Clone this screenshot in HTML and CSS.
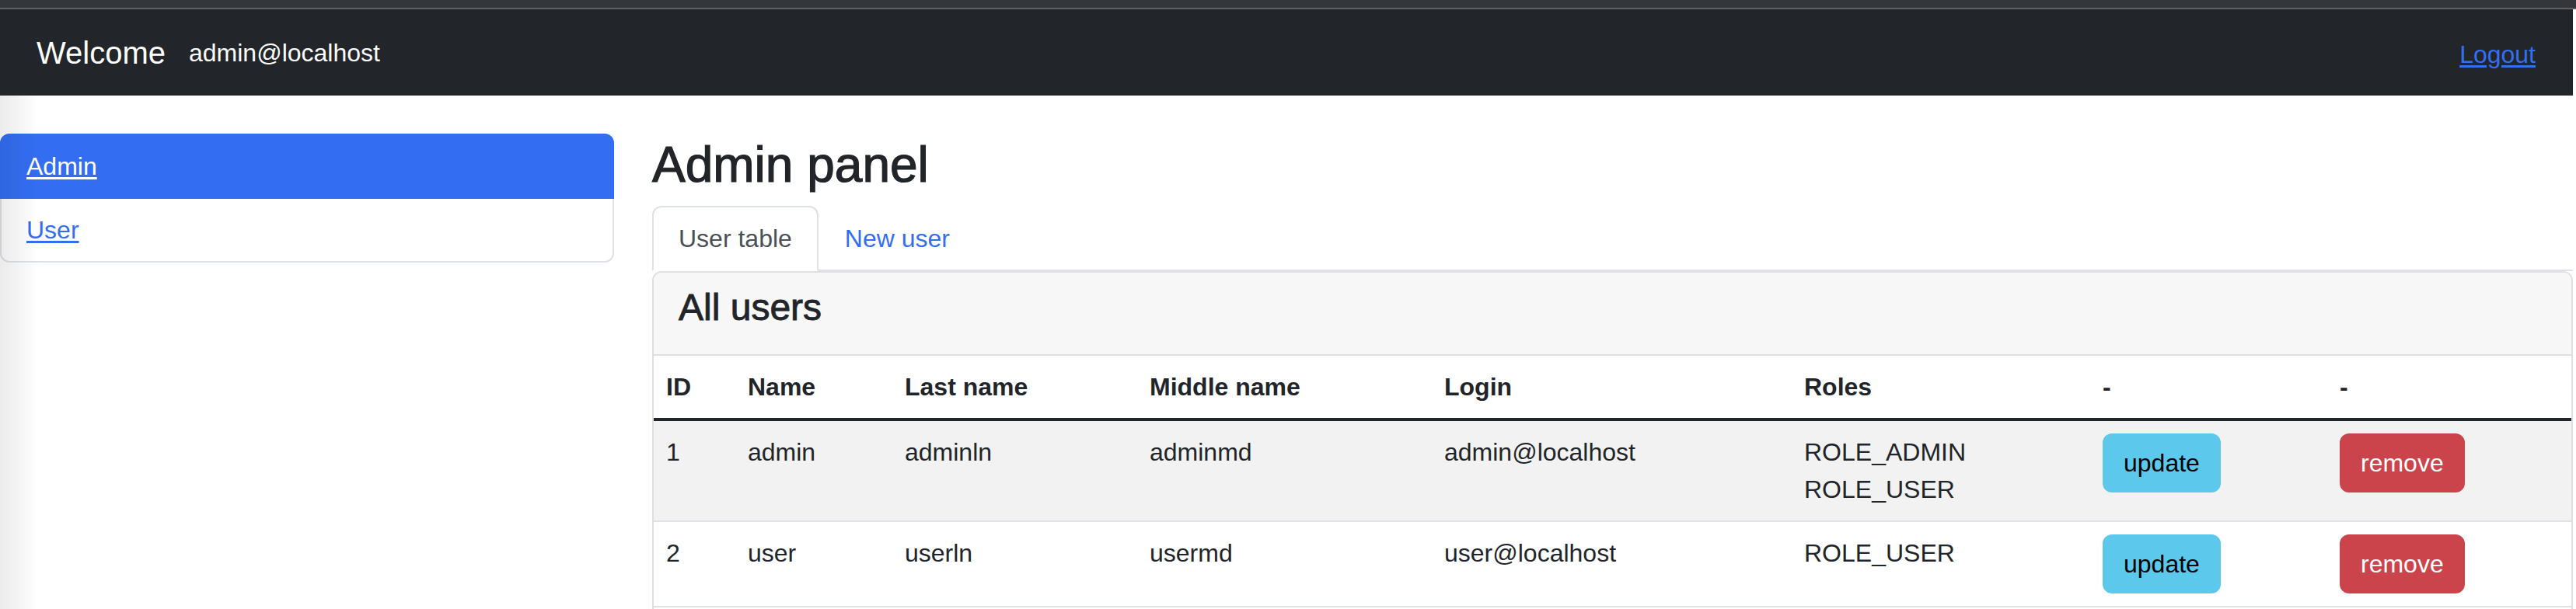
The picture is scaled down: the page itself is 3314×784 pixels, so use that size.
FILE: index.html
```html
<!DOCTYPE html>
<html lang="en">
<head>
<meta charset="utf-8">
<title>Admin panel</title>
<link rel="stylesheet" href="styles.css">
</head>
<body>
<div class="topbar"></div>
<div class="page">
  <nav class="navbar">
    <div class="brand-group">
      <span class="brand">Welcome</span>
      <span class="nav-user">admin@localhost</span>
    </div>
    <a class="logout" href="#">Logout</a>
  </nav>
  <div class="layout">
    <aside class="sidebar">
      <div class="list-group">
        <a class="list-item active" href="#">Admin</a>
        <a class="list-item" href="#">User</a>
      </div>
    </aside>
    <main class="main">
      <h2 class="title">Admin panel</h2>
      <ul class="tabs">
        <li><a class="tab active" href="#">User table</a></li>
        <li><a class="tab" href="#">New user</a></li>
      </ul>
      <div class="card">
        <div class="card-header"><h3 class="card-title">All users</h3></div>
        <table class="users">
          <colgroup>
            <col class="c-id"><col class="c-name"><col class="c-last"><col class="c-middle">
            <col class="c-login"><col class="c-roles"><col class="c-upd"><col class="c-rem">
          </colgroup>
          <thead>
            <tr><th>ID</th><th>Name</th><th>Last name</th><th>Middle name</th><th>Login</th><th>Roles</th><th>-</th><th>-</th></tr>
          </thead>
          <tbody>
            <tr>
              <td>1</td><td>admin</td><td>adminln</td><td>adminmd</td><td>admin@localhost</td>
              <td><div>ROLE_ADMIN</div><div>ROLE_USER</div></td>
              <td><button class="btn btn-info">update</button></td>
              <td><button class="btn btn-danger">remove</button></td>
            </tr>
            <tr>
              <td>2</td><td>user</td><td>userln</td><td>usermd</td><td>user@localhost</td>
              <td><div>ROLE_USER</div></td>
              <td><button class="btn btn-info">update</button></td>
              <td><button class="btn btn-danger">remove</button></td>
            </tr>
          </tbody>
        </table>
      </div>
    </main>
  </div>
</div>
<div class="edge-shadow"></div>
</body>
</html>
```
FILE: styles.css
```css
* { box-sizing: border-box; }
html, body {
  margin: 0;
  padding: 0;
  background: #ffffff;
  font-family: "Liberation Sans", Arial, sans-serif;
  font-size: 32px;
  line-height: 48px;
  color: #212529;
  overflow: hidden;
}
.topbar {
  height: 12px;
  background: #35363a;
  border-bottom: 2px solid #5f6063;
}
.page {
  width: 3310px;
}
.navbar {
  height: 111px;
  background: #222529;
  display: flex;
  align-items: center;
  justify-content: space-between;
  padding: 0 48px 0 47px;
}
.brand-group {
  display: flex;
  align-items: center;
}
.brand {
  color: #ffffff;
  font-size: 40px;
  line-height: 60px;
}
.nav-user {
  color: #ffffff;
  margin-left: 30px;
}
.logout {
  color: #3370f0;
  text-decoration: underline;
  text-decoration-thickness: 3px;
  text-underline-offset: 3px;
  margin-top: 4px;
}
.layout {
  display: grid;
  grid-template-columns: 790px 1fr;
  column-gap: 49px;
  padding-top: 49px;
}
.list-group {
  display: flex;
  flex-direction: column;
  border-radius: 12px;
}
.list-item {
  display: block;
  padding: 16px 32px;
  border: 2px solid #dee2e6;
  border-top-width: 0;
  color: #336ef2;
  text-decoration: underline;
  text-decoration-thickness: 3px;
  text-underline-offset: 3px;
  background: #fff;
}
.list-item:first-child {
  border-top-width: 2px;
  border-radius: 12px 12px 0 0;
}
.list-item:last-child {
  border-radius: 0 0 12px 12px;
}
.list-item.active {
  background: #336ef2;
  border-color: #336ef2;
  color: #ffffff;
}
.main {
  min-width: 0;
}
.title {
  margin: 2px 0 14px;
  font-size: 64px;
  line-height: 76.8px;
  font-weight: 500;
  -webkit-text-stroke: 1.2px #212529;
}
.tabs {
  list-style: none;
  margin: 0;
  padding: 0;
  display: flex;
  border-bottom: 2px solid #dee2e6;
}
.tab {
  display: block;
  padding: 16px 32px;
  border: 2px solid transparent;
  border-radius: 12px 12px 0 0;
  margin-bottom: -2px;
  color: #336ef2;
  text-decoration: none;
}
.tab.active {
  color: #495057;
  background: #ffffff;
  border-color: #dee2e6 #dee2e6 #ffffff;
}
.card {
  border: 2px solid #dfdfdf;
  border-radius: 12px;
  overflow: hidden;
  padding-bottom: 40px;
}
.card-header {
  background: #f7f7f7;
  padding: 16px 32px;
  border-bottom: 2px solid #dfdfdf;
}
.card-title {
  margin: 0 0 16px;
  font-size: 48px;
  line-height: 57.6px;
  font-weight: 500;
  -webkit-text-stroke: 0.9px #212529;
}
.users {
  width: 100%;
  border-collapse: collapse;
  table-layout: fixed;
}
.c-id { width: 105px; }
.c-name { width: 202px; }
.c-last { width: 315px; }
.c-middle { width: 379px; }
.c-login { width: 463px; }
.c-roles { width: 384px; }
.c-upd { width: 305px; }
.c-rem { width: auto; }
.users th,
.users td {
  padding: 16px;
  text-align: left;
  vertical-align: top;
  border-bottom: 2px solid #dee2e6;
  white-space: nowrap;
}
.users th {
  font-weight: bold;
  border-bottom: 4px solid #212529;
}
.users tbody tr:nth-child(odd) td {
  background: #f2f2f2;
}
.btn {
  display: inline-block;
  font-family: inherit;
  font-size: 32px;
  line-height: 48px;
  padding: 12px 25px;
  border: 2px solid transparent;
  border-radius: 12px;
  cursor: pointer;
}
.btn-info {
  background: #5bc8ec;
  border-color: #5bc8ec;
  color: #000000;
}
.btn-danger {
  background: #cc444b;
  border-color: #cc444b;
  color: #ffffff;
}
.edge-shadow {
  position: absolute;
  left: 0;
  top: 123px;
  width: 50px;
  height: 661px;
  background: linear-gradient(to right, rgba(0, 0, 0, 0.08), rgba(0, 0, 0, 0));
  pointer-events: none;
}
```
